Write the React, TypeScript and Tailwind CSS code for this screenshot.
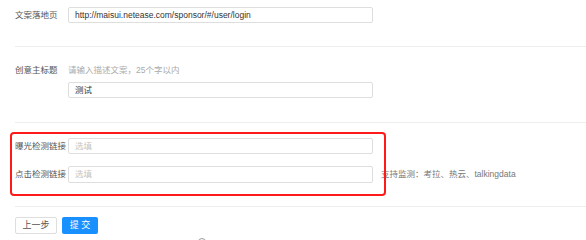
import React from "react";

const Input = ({ value, placeholder, h = "h-[16px]" }: { value?: string; placeholder?: string; h?: string }) => (
  <div className={`w-[305px] ${h} border border-[#dedede] rounded-[2px] px-[6px] flex items-center bg-white`}>
    {value ? (
      <span className="text-[#333] leading-none">{value}</span>
    ) : (
      <span className="text-[#c4c4c4] leading-none">{placeholder}</span>
    )}
  </div>
);

export default function App() {
  return (
    <div
      className="relative w-[586px] h-[240px] bg-white overflow-hidden text-[8.5px]"
      style={{ fontFamily: '"Liberation Sans", "Noto Sans CJK SC", sans-serif' }}
    >
      <div className="pl-[15px] pt-[7px]">
        <div className="flex items-center h-[16px]">
          <span className="w-[53px] text-[#555]">文案落地页</span>
          <Input value="http://maisui.netease.com/sponsor/#/user/login" />
        </div>
        <div className="mt-[23px] h-px bg-[#eeeeee]" />

        <div className="mt-[17px] flex items-center h-[12px]">
          <span className="w-[53px] text-[#555]">创意主标题</span>
          <span className="text-[#aaa]">请输入描述文案，25个字以内</span>
        </div>
        <div className="mt-[6px] ml-[53px]">
          <Input value="测试" />
        </div>
        <div className="mt-[24px] h-px bg-[#eeeeee]" />

        <div className="mt-[15px] flex items-center h-[16px]">
          <span className="w-[53px] text-[#555] whitespace-nowrap">曝光检测链接</span>
          <Input placeholder="选填" />
        </div>
        <div className="mt-[12px] flex items-center h-[17px]">
          <span className="w-[53px] text-[#555] whitespace-nowrap">点击检测链接</span>
          <Input placeholder="选填" h="h-[17px]" />
          <span className="ml-[8px] text-[#777] whitespace-nowrap">支持监测：考拉、热云、talkingdata</span>
        </div>
        <div className="mt-[23px] h-px bg-[#eeeeee]" />

        <div className="mt-[10px] flex items-center gap-[5px]">
          <div className="w-[42px] h-[17px] border border-[#dedede] rounded-[2px] flex items-center justify-center text-[#555] text-[9px]">
            上一步
          </div>
          <div className="w-[36px] h-[17px] rounded-[2px] bg-[#1890ff] flex items-center justify-center text-white text-[9px]">
            提 交
          </div>
        </div>
      </div>

      <div className="absolute left-[10px] top-[132px] w-[376px] h-[64px] border-2 border-[#ff1a1a] rounded-[4px] pointer-events-none" />
      <div className="absolute left-[198px] top-[238px] w-[8px] h-[8px] rounded-full border border-[#999]" />
    </div>
  );
}
